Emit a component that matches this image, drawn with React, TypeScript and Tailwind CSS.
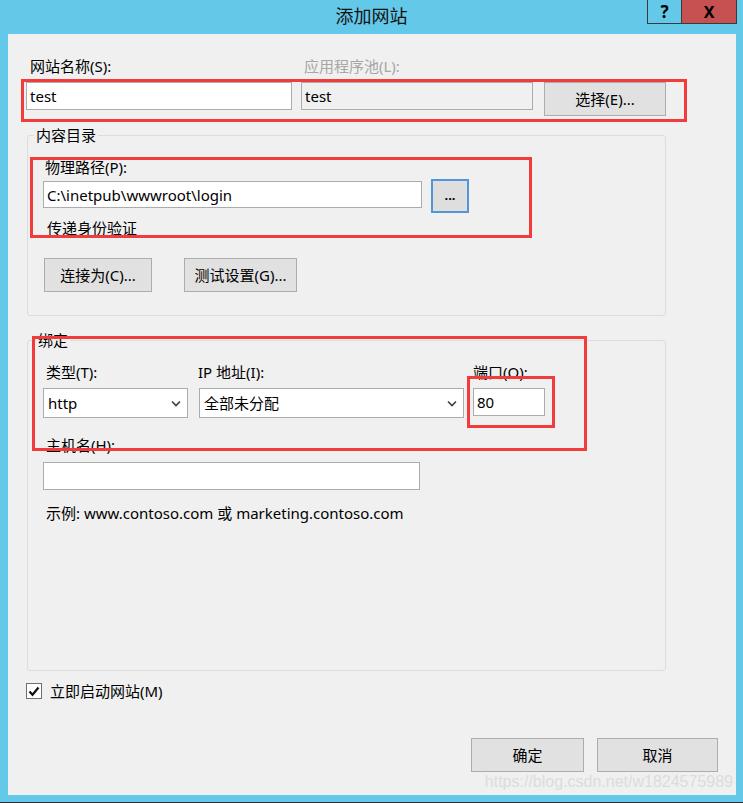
import React from 'react';

const font = "font-['Noto_Sans','Noto_Sans_CJK_SC',sans-serif]";

function TextBox({ value, className = '', disabled = false }: { value?: string; className?: string; disabled?: boolean }) {
  return (
    <div
      className={`border border-[#acacac] px-[3px] leading-[26px] ${disabled ? 'bg-[#f0f0f0] border-[#a8a8a8]' : 'bg-white'} ${className}`}
    >
      {value}
    </div>
  );
}

function Btn({ label, className = '' }: { label: string; className?: string }) {
  return (
    <div className={`flex items-center justify-center bg-[#e1e1e1] border border-[#adadad] h-[34px] ${className}`}>
      {label}
    </div>
  );
}

function Select({ value, className = '' }: { value: string; className?: string }) {
  return (
    <div className={`flex items-center justify-between border border-[#acacac] bg-white h-[30px] pl-[4px] pr-[6px] ${className}`}>
      <span>{value}</span>
      <svg width="10" height="7" viewBox="0 0 10 7">
        <path d="M1 1.5 L5 5.5 L9 1.5" fill="none" stroke="#404040" strokeWidth="1.6" />
      </svg>
    </div>
  );
}

export default function App() {
  return (
    <div className={`relative w-[743px] h-[803px] bg-[#64c8e9] flex flex-col border-b border-[#2e2e2e] text-[15px] text-black ${font}`}>
      {/* title bar */}
      <div className="h-[34px] shrink-0 grid grid-cols-[1fr_auto_1fr]">
        <div />
        <div className="text-[18px] leading-[32px] text-[#111]">添加网站</div>
        <div className="flex justify-end items-start pr-[6px]">
          <div className="flex h-[24px] border-x border-b border-[#3a3a3a]">
            <div className="w-[33px] flex items-center justify-center text-[17px] font-bold leading-none">?</div>
            <div className="w-[55px] border-l border-[#3a3a3a] bg-[#c75050] flex items-center justify-center text-[16px] font-bold leading-none">
              X
            </div>
          </div>
        </div>
      </div>

      {/* client */}
      <div className="flex-1 ml-[8px] mr-[7px] mb-[7px] bg-[#f0f0f0] flex flex-col pt-[22px]">
        <div className="flex leading-[20px] ml-[18px]">
          <div className="w-[275px] pl-[4px]">网站名称(S):</div>
          <div className="pl-[3px] text-[#a6a6a6]">应用程序池(L):</div>
        </div>
        <div className="flex items-start mt-[6px] ml-[18px]">
          <TextBox value="test" className="w-[266px] h-[28px]" />
          <TextBox value="test" disabled className="w-[232px] h-[28px] ml-[9px]" />
          <Btn label="选择(E)..." className="w-[122px] ml-[11px]" />
        </div>

        <fieldset className="mt-[9px] ml-[19px] w-[639px] border border-[#dcdcdc] rounded-[3px]">
          <legend className="ml-[6px] px-[2px] leading-[20px]">内容目录</legend>
          <div className="pl-[15px] pt-[12px] pb-[23px]">
            <div className="pl-[2px] leading-[20px]">物理路径(P):</div>
            <div className="flex items-start mt-[2px]">
              <TextBox value="C:\inetpub\wwwroot\login" className="w-[379px] h-[27px] mt-[2px] leading-[25px]" />
              <div className="ml-[9px] w-[38px] h-[34px] border-2 border-[#5196d6] bg-[#dedede] flex items-center justify-center text-[13px] font-bold leading-none pb-[2px]">
                ...
              </div>
            </div>
            <div className="mt-[5px] pl-[4px] leading-[20px]">传递身份验证</div>
            <div className="flex mt-[20px]">
              <Btn label="连接为(C)..." className="ml-[1px] w-[108px]" />
              <Btn label="测试设置(G)..." className="ml-[32px] w-[113px]" />
            </div>
          </div>
        </fieldset>

        <fieldset className="mt-[14px] ml-[19px] w-[639px] border border-[#dcdcdc] rounded-[3px]">
          <legend className="ml-[8px] px-[2px] leading-[20px]">绑定</legend>
          <div className="pl-[15px] pt-[12px] pb-[147px]">
            <div className="flex leading-[20px]">
              <div className="w-[155px] pl-[3px]">类型(T):</div>
              <div className="w-[275px]">IP 地址(I):</div>
              <div>端口(O):</div>
            </div>
            <div className="flex items-start mt-[6px]">
              <Select value="http" className="w-[145px]" />
              <Select value="全部未分配" className="w-[265px] ml-[11px]" />
              <TextBox value="80" className="w-[72px] h-[28px] ml-[9px]" />
            </div>
            <div className="mt-[17px] pl-[3px] leading-[20px]">主机名(H):</div>
            <TextBox className="mt-[7px] w-[377px] h-[28px]" />
            <div className="mt-[13px] pl-[3px] leading-[20px]">示例: www.contoso.com 或 marketing.contoso.com</div>
          </div>
        </fieldset>

        <div className="flex items-center gap-[8px] h-[20px] mt-[10px] ml-[18px]">
          <div className="w-[16px] h-[16px] border border-[#707070] bg-white flex items-center justify-center">
            <svg width="12" height="11" viewBox="0 0 12 11">
              <path d="M1.5 5.5 L4.5 8.8 L10.5 1.5" fill="none" stroke="#111" strokeWidth="2.2" />
            </svg>
          </div>
          <span className="leading-[20px]">立即启动网站(M)</span>
        </div>

        <div className="flex justify-end gap-[13px] mt-[37px] mr-[18px]">
          <Btn label="确定" className="w-[113px]" />
          <Btn label="取消" className="w-[121px]" />
        </div>
      </div>

      {/* watermark */}
      <div className="absolute right-[10px] bottom-[10px] text-[16px] leading-[20px] text-[#dcdcdc] font-['Liberation_Sans',sans-serif]">
        https://blog.csdn.net/w1824575989
      </div>

      {/* red annotation frames */}
      <div className="absolute left-[21px] top-[79px] w-[666px] h-[43px] border-[3px] border-[#f23b3b]" />
      <div className="absolute left-[30px] top-[157px] w-[502px] h-[81px] border-[3px] border-[#f23b3b]" />
      <div className="absolute left-[32px] top-[336px] w-[555px] h-[115px] border-[3px] border-[#f23b3b]" />
      <div className="absolute left-[467px] top-[376px] w-[88px] h-[52px] border-[3px] border-[#f23b3b]" />
    </div>
  );
}
